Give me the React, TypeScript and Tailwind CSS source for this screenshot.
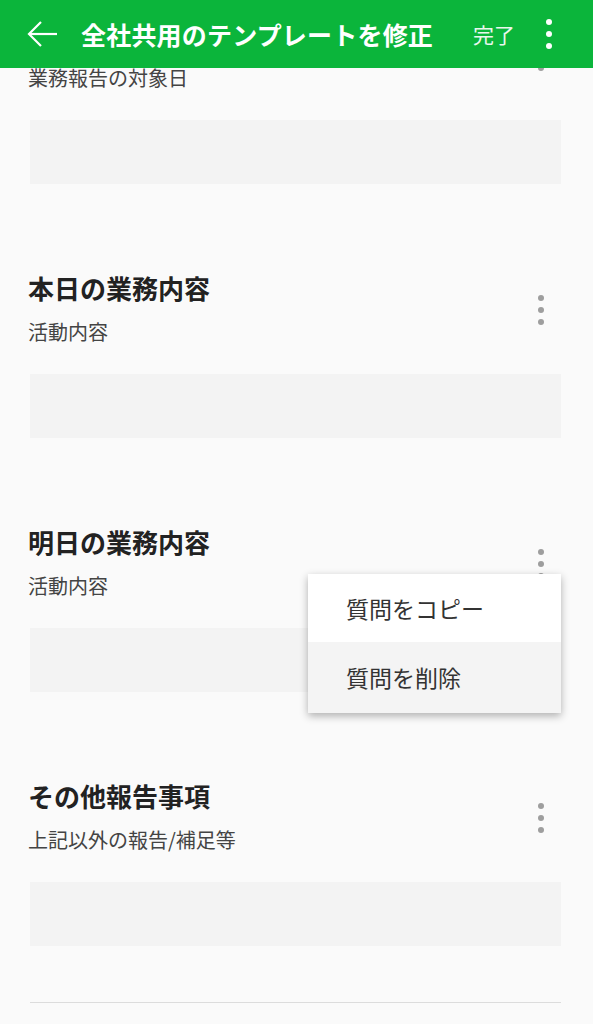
import React from 'react';

// first item is scrolled up under the header, so its title stays off screen
const sections = [
  { title: '', sub: '業務報告の対象日' },
  { title: '本日の業務内容', sub: '活動内容' },
  { title: '明日の業務内容', sub: '活動内容', menu: true },
  { title: 'その他報告事項', sub: '上記以外の報告/補足等' },
];

const Kebab = ({ light = false }: { light?: boolean }) => (
  <div className="flex flex-col items-center gap-[6px]">
    {[0, 1, 2].map((i) => (
      <span
        key={i}
        className={light ? 'block h-[6px] w-[6px] rounded-full bg-white' : 'block h-[6px] w-[6px] rounded-full bg-[#9e9e9e]'}
      />
    ))}
  </div>
);

const QuestionMenu = () => (
  <div className="absolute right-0 top-[46px] z-10 w-[253px] bg-white shadow-[0_3px_8px_rgba(0,0,0,0.3)]">
    <div className="flex h-[68px] items-center pl-[38px] text-[23px] text-[#333]">質問をコピー</div>
    <div className="flex h-[71px] items-center bg-[#f4f4f4] pl-[38px] text-[23px] text-[#333]">質問を削除</div>
  </div>
);

export default function App() {
  return (
    <div
      className="relative h-[1024px] w-[593px] overflow-hidden bg-[#fafafa]"
      style={{ fontFamily: '"Noto Sans CJK JP", "Noto Sans", sans-serif' }}
    >
      {/* header lies over the scrolled list */}
      <header className="absolute inset-x-0 top-0 z-20 flex h-[68px] items-center bg-[#0bb53b] text-white">
        <button className="ml-[27px] flex h-[30px] w-[32px] items-center">
          <svg width="31" height="28" viewBox="0 0 31 28" fill="none" stroke="white" strokeWidth="2.2">
            <path d="M30 14H2" />
            <path d="M14 2 2 14l12 12" />
          </svg>
        </button>
        <h1 className="ml-[22px] text-[25px] font-bold leading-none tracking-[0.2px]">全社共用のテンプレートを修正</h1>
        <span className="ml-[40px] text-[21px] leading-none text-[#eaf7ee]">完了</span>
        <div className="ml-[31px]">
          <Kebab light />
        </div>
      </header>

      <main className="pl-[30px] pr-[32px] pt-[20px]">
        {sections.map((s) => (
          <section key={s.sub + s.title} className="relative mb-[90px]">
            <div className="flex items-center">
              <div className="flex-1">
                <h2 className="-ml-0.5 h-[36px] text-[26px] font-bold leading-[28px] text-[#222]">{s.title}</h2>
                <p className="-ml-0.5 mt-2 h-[28px] text-[20px] leading-[28px] text-[#444]">{s.sub}</p>
              </div>
              <div className="flex w-[40px] justify-center">
                <Kebab />
              </div>
            </div>
            <div className="mt-[28px] h-[64px] bg-[#f3f3f3]" />
            {s.menu && <QuestionMenu />}
          </section>
        ))}
        <div className="-mt-[34px] h-px bg-[#dcdcdc]" />
      </main>
    </div>
  );
}
